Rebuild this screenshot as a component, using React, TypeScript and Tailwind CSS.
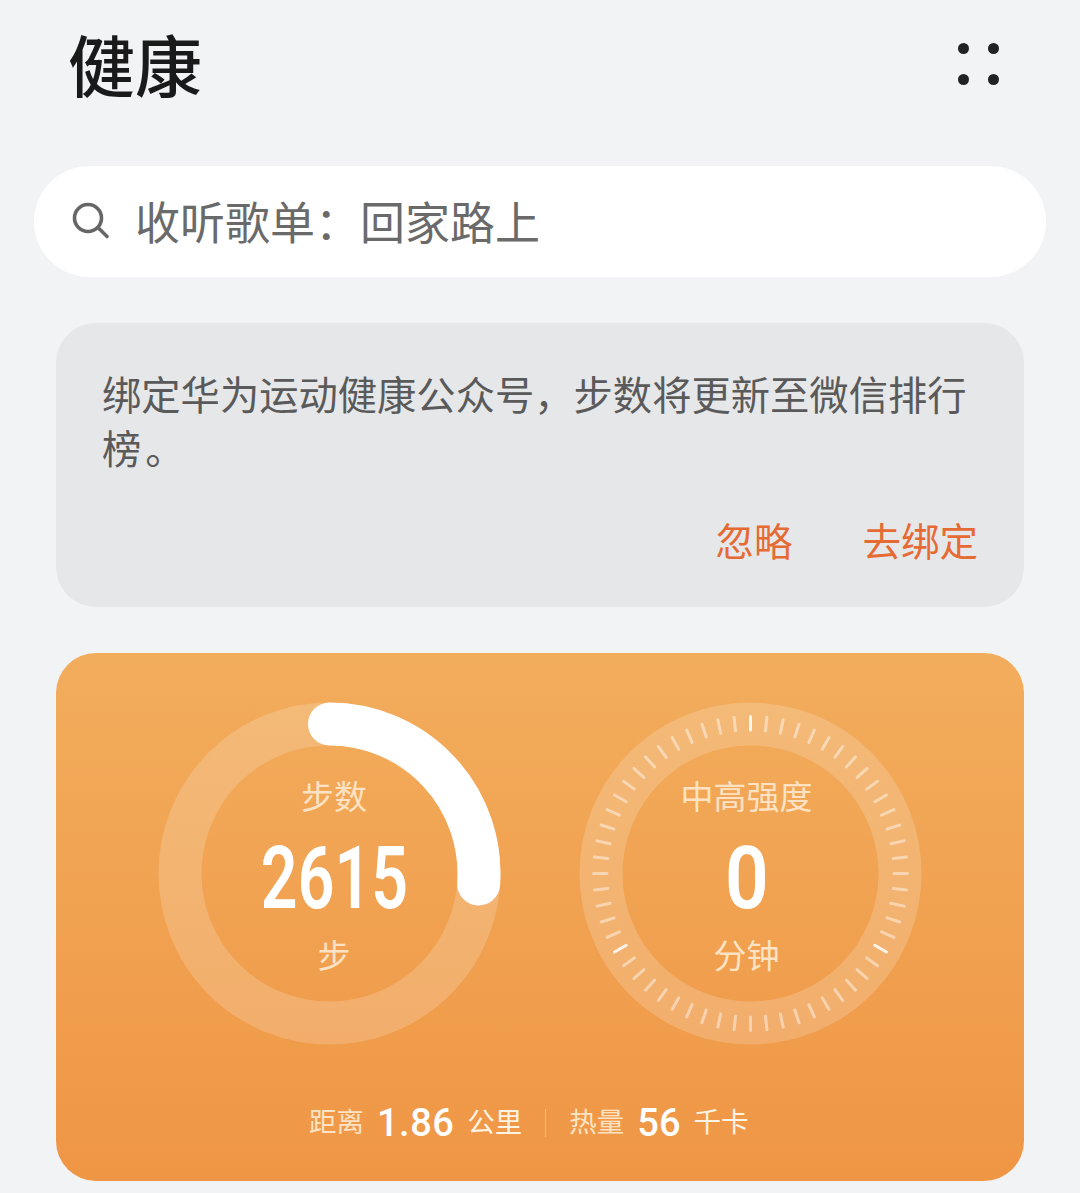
import React from 'react';

const cjk = "font-['Roboto','Noto_Sans_CJK_SC',sans-serif]";

const polar = (r: number, deg: number) => {
  const a = ((deg - 90) * Math.PI) / 180;
  return [171.5 + r * Math.cos(a), 171.5 + r * Math.sin(a)];
};

const StepRing: React.FC = () => {
  const [ex, ey] = polar(149.5, 94);
  return (
    <svg width="343" height="343" viewBox="0 0 343 343" className="block">
      <circle cx="171.5" cy="171.5" r="149.5" fill="none" stroke="#fff" strokeOpacity="0.18" strokeWidth="43" />
      <path
        d={`M171.5 22 A149.5 149.5 0 0 1 ${ex} ${ey}`}
        fill="none"
        stroke="#fff"
        strokeWidth="43"
        strokeLinecap="round"
      />
    </svg>
  );
};

const IntensityRing: React.FC = () => {
  const ticks = Array.from({ length: 60 }, (_, i) => i * 6);
  return (
    <svg width="343" height="343" viewBox="0 0 343 343" className="block">
      <circle cx="171.5" cy="171.5" r="149.5" fill="none" stroke="#fff" strokeOpacity="0.18" strokeWidth="43" />
      {ticks.map((deg) => {
        const [x1, y1] = polar(143.5, deg);
        const [x2, y2] = polar(157, deg);
        const bright = deg === 0 || deg === 120 || deg === 240;
        return (
          <line
            key={deg}
            x1={x1}
            y1={y1}
            x2={x2}
            y2={y2}
            stroke="#fff"
            strokeOpacity={bright ? 0.85 : 0.45}
            strokeWidth="3"
            strokeLinecap="round"
          />
        );
      })}
    </svg>
  );
};

const Ring: React.FC<{
  label: string;
  value: string;
  unit: string;
  className: string;
  valueClass: string;
  children: React.ReactNode;
}> = ({ label, value, unit, className, valueClass, children }) => (
  <div className="relative w-[343px] h-[343px]">
    {children}
    <div className={`absolute inset-0 flex flex-col items-center ${className}`}>
      <div className="mt-[73px] h-[46px] leading-[46px] text-[33px] text-[#fde3c4]">{label}</div>
      <div className={`mt-[7px] h-[100px] leading-[100px] text-[87px] font-semibold text-white ${valueClass}`}>{value}</div>
      <div className="mt-[6px] h-[46px] leading-[46px] text-[33px] text-[#fde3c4]">{unit}</div>
    </div>
  </div>
);

export default function App() {
  return (
    <div className={`w-[1080px] h-[1193px] overflow-hidden bg-[#f1f3f5] ${cjk}`}>
      <header className="h-[166px] pl-[68px] pr-[81px] flex justify-between">
        <h1 className="mt-[24px] h-[90px] leading-[90px] text-[67px] font-medium text-[#1a1a1a]">健康</h1>
        <div className="mt-[43px] w-[41px] h-[41px] grid grid-cols-2 gap-y-[20px] gap-x-[20px]">
          <span className="w-[11px] h-[11px] rounded-full bg-[#222]" />
          <span className="w-[11px] h-[11px] rounded-full bg-[#222] justify-self-end" />
          <span className="w-[11px] h-[11px] rounded-full bg-[#222]" />
          <span className="w-[11px] h-[11px] rounded-full bg-[#222] justify-self-end" />
        </div>
      </header>

      <div className="mx-[34px] h-[111px] rounded-full bg-white flex items-center pl-[38px]">
        <svg width="38" height="38" viewBox="0 0 38 38" fill="none" stroke="#666" strokeWidth="3.6" strokeLinecap="round" className="-mt-[1px]">
          <circle cx="16" cy="16" r="13.5" />
          <path d="M27.5 27 L35 34.5" />
        </svg>
        <span className="ml-[25px] mt-[6px] text-[45px] leading-none text-[#6a6a6a]">收听歌单：回家路上</span>
      </div>

      <section className="mx-[56px] mt-[46px] h-[284px] rounded-[40px] bg-[#e6e7e9] px-[46px] pt-[47px]">
        <p className="text-[39.3px] leading-[54px] text-[#5a5a5a]">绑定华为运动健康公众号，步数将更新至微信排行榜{'\u200a'}。</p>
        <div className="mt-[38px] flex justify-end gap-[70px] text-[38.5px] leading-[54px] text-[#e56a33]">
          <span>忽略</span>
          <span>去绑定</span>
        </div>
      </section>

      <section className="mx-[56px] mt-[46px] h-[528px] rounded-[40px] bg-gradient-to-b from-[#f2ad5c] to-[#ef9645]">
        <div className="pt-[49px] pl-[102px] flex gap-[78px]">
          <Ring label="步数" value="2615" unit="步" className="pl-[9px]" valueClass="scale-x-[0.74]">
            <StepRing />
          </Ring>
          <Ring label="中高强度" value="0" unit="分钟" className="pr-[8px]" valueClass="scale-x-[0.88]">
            <IntensityRing />
          </Ring>
        </div>
        <div className="mt-[53px] pl-[253px] h-[50px] flex items-center text-[27.5px] text-[#fde3c4]">
          <span>距离</span>
          <span className="ml-[13px] text-[38px] font-medium text-white tracking-[0.5px]">1.86</span>
          <span className="ml-[13px] text-[#fff3e3]">公里</span>
          <span className="ml-[23px] mr-[23px] w-px h-[28px] bg-[#fde3c4]/50" />
          <span>热量</span>
          <span className="ml-[13px] text-[38px] font-medium text-white">56</span>
          <span className="ml-[13px] text-[#fff3e3]">千卡</span>
        </div>
      </section>
    </div>
  );
}
